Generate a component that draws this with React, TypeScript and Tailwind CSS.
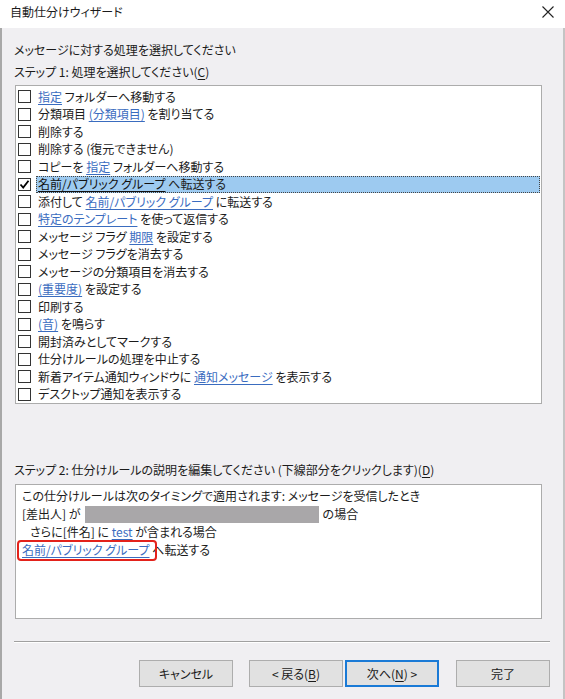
import React from 'react';

type Part = { t: string; link?: boolean };

const actions: Part[][] = [
  [{ t: '指定', link: true }, { t: ' フォルダーへ移動する' }],
  [{ t: '分類項目 ' }, { t: '(分類項目)', link: true }, { t: ' を割り当てる' }],
  [{ t: '削除する' }],
  [{ t: '削除する (復元できません)' }],
  [{ t: 'コピーを ' }, { t: '指定', link: true }, { t: ' フォルダーへ移動する' }],
  [{ t: '名前/パブリック グループ', link: true }, { t: ' へ転送する' }],
  [{ t: '添付して ' }, { t: '名前/パブリック グループ', link: true }, { t: ' に転送する' }],
  [{ t: '特定のテンプレート', link: true }, { t: ' を使って返信する' }],
  [{ t: 'メッセージ フラグ ' }, { t: '期限', link: true }, { t: ' を設定する' }],
  [{ t: 'メッセージ フラグを消去する' }],
  [{ t: 'メッセージの分類項目を消去する' }],
  [{ t: '(重要度)', link: true }, { t: ' を設定する' }],
  [{ t: '印刷する' }],
  [{ t: '(音)', link: true }, { t: ' を鳴らす' }],
  [{ t: '開封済みとしてマークする' }],
  [{ t: '仕分けルールの処理を中止する' }],
  [{ t: '新着アイテム通知ウィンドウに ' }, { t: '通知メッセージ', link: true }, { t: ' を表示する' }],
  [{ t: 'デスクトップ通知を表示する' }],
];

const SELECTED = 5;

const Checkbox: React.FC<{ checked: boolean }> = ({ checked }) => (
  <div className="w-[13px] h-[13px] border border-[#333] bg-white flex items-center justify-center shrink-0">
    {checked && (
      <svg width="11" height="11" viewBox="0 0 11 11">
        <path d="M1.5 5.5 L4.2 8.5 L9.5 1.8" fill="none" stroke="#000" strokeWidth="1.8" />
      </svg>
    )}
  </div>
);

const Button: React.FC<{ children: React.ReactNode; focused?: boolean; className?: string }> = ({
  children,
  focused,
  className,
}) => (
  <div
    className={`w-[94px] h-[27px] flex items-center justify-center bg-[#e1e1e1] ${
      focused ? 'border-2 border-[#1a7ad6]' : 'border border-[#adadad]'
    } ${className || ''}`}
  >
    {children}
  </div>
);

export default function App() {
  return (
    <div className="w-[565px] h-[699px] overflow-hidden flex flex-col text-[12px] text-[#1b1b1b] font-['Noto_Sans_CJK_JP','Noto_Sans',sans-serif] [font-feature-settings:'palt']">
      {/* Title bar */}
      <div className="h-[28px] bg-white flex items-start justify-between pt-[3px] pl-[10px] pr-[11px] shrink-0">
        <span className="leading-[18px]">自動仕分けウィザード</span>
        <svg width="12" height="12" viewBox="0 0 12 12" className="mt-[3px]">
          <path d="M0.5 0.5 L11.5 11.5 M11.5 0.5 L0.5 11.5" stroke="#222" strokeWidth="1.1" />
        </svg>
      </div>

      {/* Body */}
      <div className="flex-1 bg-[#f0eff2] border-l-2 border-l-[#a8a8a8] border-r-2 border-r-[#c4c4c4] flex flex-col pt-[11px]">
        <div className="ml-[12px] leading-[22px]">メッセージに対する処理を選択してください</div>
        <div className="ml-[12px] leading-[22px]">
          ステップ 1: 処理を選択してください(<span className="underline underline-offset-2">C</span>)
        </div>

        {/* Step 1 list */}
        <div className="mt-[2px] ml-[13px] w-[527px] h-[319px] bg-white border border-[#acacac] pt-[2px]">
          {actions.map((parts, i) => (
            <div key={i} className="h-[17.5px] flex items-center">
              <div className="ml-[2px]">
                <Checkbox checked={i === SELECTED} />
              </div>
              <div
                className={`ml-[5px] mr-[1px] flex-1 h-[17px] pl-[1px] flex items-center whitespace-pre ${
                  i === SELECTED ? 'bg-[#9dcaf0] border border-dotted border-[#444]' : 'border border-transparent'
                }`}
              >
                {parts.map((p, j) =>
                  p.link ? (
                    <span
                      key={j}
                      className={`underline underline-offset-2 ${i === SELECTED ? 'text-[#111]' : 'text-[#3a6cbf]'}`}
                    >
                      {p.t}
                    </span>
                  ) : (
                    <span key={j}>{p.t}</span>
                  )
                )}
              </div>
            </div>
          ))}
        </div>

        <div className="mt-[55px] ml-[12px] leading-[22px]">
          ステップ 2: 仕分けルールの説明を編集してください (下線部分をクリックします)(
          <span className="underline underline-offset-2">D</span>)
        </div>

        {/* Step 2 description */}
        <div className="mt-[3px] ml-[13px] w-[527px] h-[135px] bg-white border border-[#acacac] pt-[2px] pl-[6px] leading-[18px] whitespace-pre">
          <div>この仕分けルールは次のタイミングで適用されます: メッセージを受信したとき</div>
          <div className="flex items-center">
            <span>[差出人] が</span>
            <span className="block shrink-0 w-[234px] h-[17px] bg-[#a9a7a9] ml-[4px] mr-[4px]" />
            <span>の場合</span>
          </div>
          <div className="pl-[8px]">
            さらに[件名] に <span className="text-[#3a6cbf] underline underline-offset-2">test</span> が含まれる場合
          </div>
          <div className="relative">
            <span className="text-[#3a6cbf] underline underline-offset-2">名前/パブリック グループ</span>
            <span> へ転送する</span>
            <div className="absolute left-[-5px] top-[-1px] w-[140px] h-[21px] border-2 border-[#e3221b] rounded-[4px]" />
          </div>
        </div>

        {/* Separator */}
        <div className="mt-[22px] ml-[12px] w-[536px] border-t border-t-[#a0a0a0] border-b border-b-white" />

        {/* Buttons */}
        <div className="mt-[17px] flex justify-end pr-[13px]">
          <Button>キャンセル</Button>
          <Button className="ml-[16px]">
            &lt; 戻る(<span className="underline underline-offset-2">B</span>)
          </Button>
          <Button focused className="ml-[2px]">
            次へ(<span className="underline underline-offset-2">N</span>) &gt;
          </Button>
          <Button className="ml-[17px]">完了</Button>
        </div>
      </div>
    </div>
  );
}
